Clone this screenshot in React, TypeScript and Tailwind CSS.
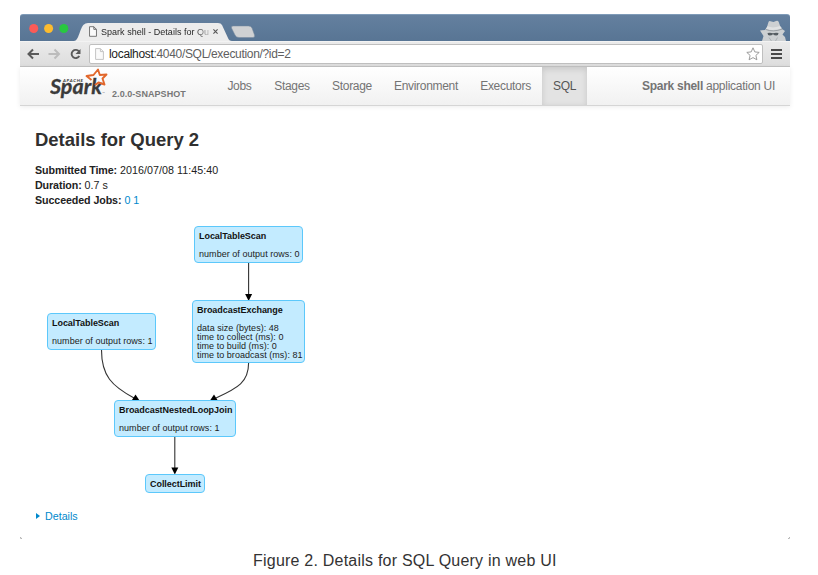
import type { ReactNode } from "react";

type PlanNodeProps = { box: string; title: string; metrics?: string[] };

function PlanNode({ box, title, metrics }: PlanNodeProps) {
  return (
    <div className={`absolute rounded-[4px] border border-[#5cc8fb] bg-[#c3ebff] pl-1 text-[9px] leading-[9px] whitespace-nowrap text-[#1c1c1c] ${box}`}>
      <div className="mt-[5px] font-bold tracking-[-0.05px] text-[#111]">{title}</div>
      {metrics && (
        <div className="mt-[9px] tracking-[0.04px]">
          {metrics.map((m) => (
            <div key={m}>{m}</div>
          ))}
        </div>
      )}
    </div>
  );
}

function NavItem({ width, active, children }: { width: string; active?: boolean; children: ReactNode }) {
  return (
    <div
      className={`flex h-[38px] items-center justify-center text-[12px] tracking-[-0.3px] ${width} ${
        active
          ? "bg-[#e3e3e3] text-[#555] shadow-[inset_0_2px_6px_rgba(0,0,0,0.13)]"
          : "text-[#747474]"
      }`}
    >
      {children}
    </div>
  );
}

function PageIcon({ tone, className }: { tone: string; className: string }) {
  return (
    <svg viewBox="0 0 9 12" className={className} fill="#fafafa" stroke={tone}>
      <path d="M.6.6h4.8l3 3v7.8H.6zM5.4.6v3h3" />
    </svg>
  );
}

function TitleBar() {
  return (
    <div className="relative h-[27px] rounded-t-[3px] border-t border-[#7f9bb8] bg-linear-to-b from-[#64809f] to-[#587594]">
      <svg viewBox="0 0 250 26" className="absolute top-0 left-0 h-[26px] w-[250px]">
        <circle cx="13.7" cy="13.5" r="4.5" fill="#fc5b57" />
        <circle cx="28.6" cy="13.5" r="4.5" fill="#fdbc2e" />
        <circle cx="43.8" cy="13.5" r="4.5" fill="#28c840" />
        <path d="M54 26C59 26 60 12 64 9.500Q65 8 68 8H198Q201 8 202 10L208 23Q209 26 212 26Z" fill="#ececec" />
        <path d="M213 11H228.500Q231 11 232 13L234.500 20Q235 22.500 233 22.500H219Q216 22.500 215 20L211.500 13Q211 11 213 11Z" fill="#cfd1d3" stroke="#76899d" strokeWidth=".5" />
      </svg>
      <div className="relative flex h-[26px] items-center pt-[7px] pl-[69px]">
        <PageIcon tone="#666" className="h-[11px] w-[8px]" />
        <span className="ml-[4px] w-[109px] bg-linear-to-r from-[#222] from-85% to-[#c5c5c5] bg-clip-text text-[9px] leading-[12px] tracking-[0.02px] whitespace-nowrap text-transparent">
          Spark shell - Details for Qu
        </span>
        <svg viewBox="0 0 6 6" className="ml-[3px] h-[5px] w-[5px]" stroke="#555" strokeWidth="1.300">
          <path d="M.5.5l5 5M5.500.5l-5 5" />
        </svg>
      </div>
      <svg viewBox="0 0 26 21" className="absolute top-[5px] right-[4px] h-[21px] w-[26px]">
        <path d="M0 10.500L5 10 7 7 8.500 2Q9 .8 10.500 1.200L13.500 2 16 1Q18 .3 18.700 2L20.500 7 22 9 25 11 22.500 14.500 25 17 26 21H2L3.500 16Z" fill="#cdd0d2" />
        <path d="M7.500 6.300Q13 8.700 20 6L22 8.300Q13 11.500 6 9Z" fill="#e0e2e3" />
        <path d="M6 9.500Q13 12.500 22.500 9" fill="none" stroke="#8a9196" strokeWidth=".8" />
        <path d="M7.500 13Q10.500 12.300 13 13.300 15.500 12.300 18.500 13 18.500 15.500 16.300 15.500 14.300 15.500 13 14.200 11.700 15.500 9.700 15.500 7.500 15.500 7.500 13" fill="#565d62" />
        <path d="M9 17.500L11.500 21M17.500 17.500L15.500 21" stroke="#aeb3b6" />
      </svg>
    </div>
  );
}

function AddressBar() {
  return (
    <div className="flex h-[26px] items-center border-t border-[#f3f3f3] border-b border-b-[#c2c2c2] bg-linear-to-b from-[#ebebeb] to-[#dddddd]">
      <svg viewBox="0 0 60 16" className="ml-[6px] h-[16px] w-[60px] shrink-0" fill="none" strokeWidth="2">
        <path d="M13 8H3M7 3.500L2.500 8 7 12.500" stroke="#5a5a5a" />
        <path d="M22.500 8h10M28.500 3.500L33 8l-4.500 4.500" stroke="#bcbcbc" />
        <path d="M53 5.500A4.100 4.100 0 1 0 53.300 10" stroke="#5a5a5a" strokeWidth="1.900" />
        <path d="M54.500 3v5H49.500Z" fill="#5a5a5a" />
      </svg>
      <div className="ml-[3px] flex h-[20px] w-[674px] items-center rounded-[2px] border border-[#bfbfbf] bg-white">
        <PageIcon tone="#c4c4c4" className="ml-[5px] h-[12px] w-[9px]" />
        <span className="ml-[5px] text-[12px] tracking-[-0.32px] text-[#606060]">
          <span className="text-[#1d1d1d]">localhost</span>:4040/SQL/execution/?id=2
        </span>
        <svg viewBox="0 0 14 14" className="mr-[2px] ml-auto h-[14px] w-[14px]" fill="#fff" stroke="#929292" strokeWidth=".9">
          <path d="M7 .8l1.800 4.100 4.400.5-3.300 3 1 4.400L7 10.600l-3.900 2.200 1-4.400-3.300-3 4.400-.5z" />
        </svg>
      </div>
      <div className="ml-[8px] flex flex-col gap-[2px]">
        <div className="h-[2px] w-[11px] bg-[#494949]" />
        <div className="h-[2px] w-[11px] bg-[#494949]" />
        <div className="h-[2px] w-[11px] bg-[#494949]" />
      </div>
    </div>
  );
}

function SparkLogo() {
  return (
    <svg viewBox="0 0 60 38" className="h-[38px] w-[60px] shrink-0">
      <text x="0" y="27" textLength="52" lengthAdjust="spacingAndGlyphs" fill="#3b3b3b" stroke="#3b3b3b" strokeWidth=".3" className="font-[Lato] text-[20.500px] font-bold italic">
        Spark
      </text>
      <text x="13" y="14.500" textLength="20" fill="#3b3b3b" className="font-[Lato] text-[4.500px] font-bold italic">
        APACHE
      </text>
      <path d="M41.500 13L36.500 9 43.500 8 48 2.500 49.800 8 56.500 7.500 52.500 11.500 54.500 17.500 48.500 15.500 45 18" fill="none" stroke="#e2672b" strokeWidth="1.900" strokeLinejoin="round" />
      <text x="52" y="27" fill="#777" className="text-[3px]">™</text>
    </svg>
  );
}

function NavBar() {
  return (
    <div className="flex h-[39px] border-b border-[#d5d5d5] bg-linear-to-b from-white to-[#f1f1f1] shadow-[0_1px_5px_rgba(0,0,0,0.08)]">
      <div className="flex w-[196px] pl-[30px]">
        <SparkLogo />
        <span className="mt-[20px] ml-[2px] text-[9px] leading-[14px] font-bold tracking-[0.06px] whitespace-nowrap text-[#777]">
          2.0.0-SNAPSHOT
        </span>
      </div>
      <NavItem width="w-[47px]">Jobs</NavItem>
      <NavItem width="w-[58px]">Stages</NavItem>
      <NavItem width="w-[62px]">Storage</NavItem>
      <NavItem width="w-[86px]">Environment</NavItem>
      <NavItem width="w-[73px]">Executors</NavItem>
      <NavItem width="w-[45px]" active>SQL</NavItem>
      <div className="mr-[15px] ml-auto flex h-[38px] items-center text-[12px] tracking-[-0.27px] whitespace-nowrap text-[#747474]">
        <b>Spark shell</b>&nbsp;application UI
      </div>
    </div>
  );
}

function PlanGraph() {
  return (
    <div className="relative h-[300px] w-[770px]">
      <svg viewBox="20 206 770 300" className="absolute inset-0 h-[300px] w-[770px]" fill="none" stroke="#333" strokeWidth="1.100">
        <path d="M248.600 263V295M101.500 350C101.500 376 112 386 134 398M248.600 363C248.600 382 238 388 216 398M174.800 437V469" />
        <g fill="#000" stroke="none">
          <path d="M245.100 294h7l-3.500 7z" />
          <path d="M171.300 467.500h7l-3.500 7z" />
          <path d="M135.500 394.500L131.700 400.500H139.500z" />
          <path d="M214 394.500L217.800 400.500H210z" />
        </g>
      </svg>
      <PlanNode box="left-[174px] top-[20px] w-[109px] h-[37px]" title="LocalTableScan" metrics={["number of output rows: 0"]} />
      <PlanNode box="left-[172px] top-[94px] w-[113px] h-[63px]" title="BroadcastExchange" metrics={["data size (bytes): 48", "time to collect (ms): 0", "time to build (ms): 0", "time to broadcast (ms): 81"]} />
      <PlanNode box="left-[27px] top-[107px] w-[109px] h-[37px]" title="LocalTableScan" metrics={["number of output rows: 1"]} />
      <PlanNode box="left-[94px] top-[194px] w-[122px] h-[37px]" title="BroadcastNestedLoopJoin" metrics={["number of output rows: 1"]} />
      <PlanNode box="left-[125px] top-[268px] w-[60px] h-[19px]" title="CollectLimit" />
    </div>
  );
}

export default function App() {
  return (
    <div className="h-[575px] w-[818px] overflow-hidden bg-white pt-[14px] font-['Liberation_Sans',Arial,sans-serif]">
      <div className="relative ml-[20px] h-[525px] w-[770px]">
        <TitleBar />
        <AddressBar />
        <NavBar />
        <div className="h-[100px] pt-[22px] pl-[15px] text-[10.700px] leading-[15px] text-[#222]">
          <h1 className="h-[35px] text-[18.500px] leading-[24px] font-bold tracking-[-0.02px] text-[#303030]">Details for Query 2</h1>
          <div><b className="tracking-[-0.1px]">Submitted Time:</b> <span className="tracking-[0.05px]">2016/07/08 11:45:40</span></div>
          <div><b className="tracking-[-0.1px]">Duration:</b> 0.7 s</div>
          <div><b className="tracking-[-0.1px]">Succeeded Jobs:</b> <span className="text-[#0088cc]">0 1</span></div>
        </div>
        <PlanGraph />
        <div className="flex items-center pt-[2px] pl-[16px] text-[10.700px] leading-[15px] text-[#0088cc]">
          <span className="mr-[5px] h-0 w-0 border-y-[3px] border-l-4 border-y-transparent border-l-[#0088cc]" />
          <span className="pt-px">Details</span>
        </div>
        <span className="absolute bottom-0 left-0 h-[2px] w-[2px] rounded-bl border-b border-l border-[#aaa]" />
        <span className="absolute right-0 bottom-0 h-[2px] w-[2px] rounded-br border-r border-b border-[#aaa]" />
      </div>
      <p className="mt-[12px] ml-[253px] text-[16px] leading-[20px] tracking-[0.22px] text-[#333]">Figure 2. Details for SQL Query in web UI</p>
    </div>
  );
}
